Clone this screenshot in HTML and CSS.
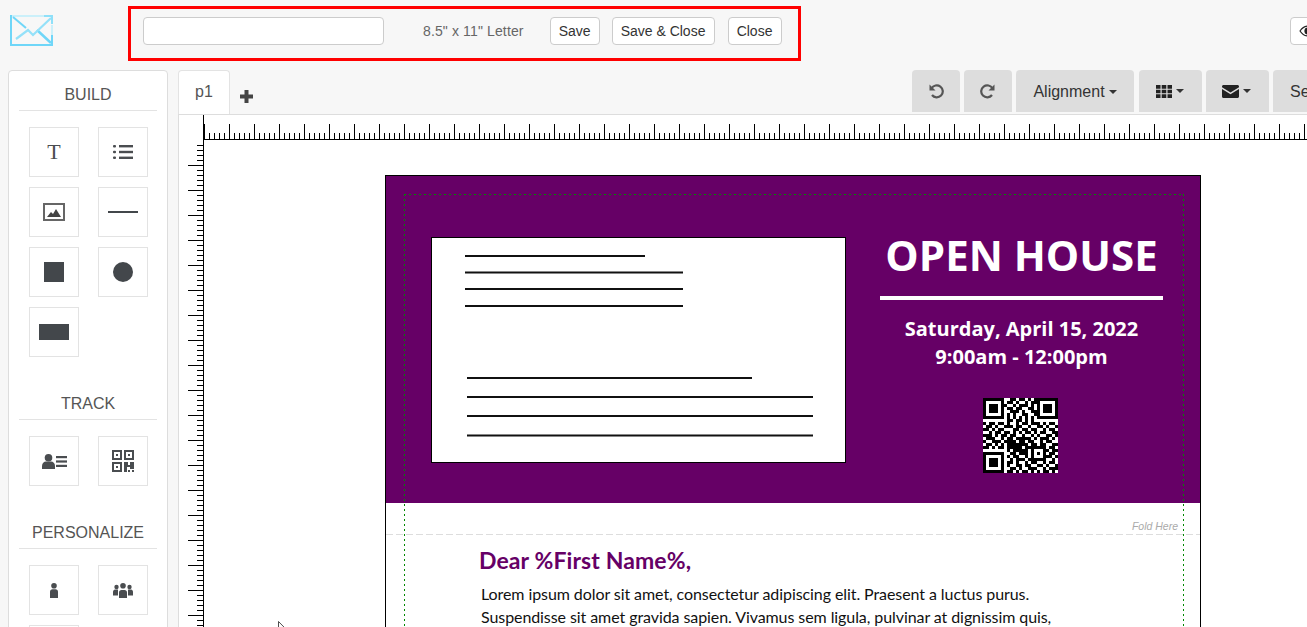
FILE: index.html
```html
<!DOCTYPE html>
<html lang="en">
<head>
  <meta charset="UTF-8">
  <meta name="viewport" content="width=device-width, initial-scale=1.0">
  <title>Mailer Editor</title>
  <link rel="stylesheet" href="styles.css">
</head>
<body>
  <header class="topbar">
    <svg class="logo" width="43" height="31" viewBox="0 0 43 31" fill="none">
      <path d="M34 1H1v29h41V10" stroke="#bdeefc" stroke-width="1.5"/>
      <path d="M1 0v31M0 30h43M42 20v11" stroke="#6fd6f8" stroke-width="2"/>
      <path d="M3 2l13 11" stroke="#6fd6f8" stroke-width="2"/>
      <path d="M27 15l14 13" stroke="#6fd6f8" stroke-width="2.5"/>
      <path d="M6 24l12-9 5 5L41 3" stroke="#94e1f9" stroke-width="2.2"/>
      <path d="M34 1h8v8" stroke="#8fe0f9" stroke-width="2"/>
    </svg>
    <div class="title-box">
      <input class="name-input" type="text">
      <span class="paper-size">8.5" x 11" Letter</span>
      <button class="btn">Save</button>
      <button class="btn btn-wide">Save &amp; Close</button>
      <button class="btn btn-close">Close</button>
    </div>
    <button class="btn btn-eye">
      <svg width="18" height="12" viewBox="0 0 18 12"><path d="M1 6c2-3 5-5 8-5s6 2 8 5c-2 3-5 5-8 5S3 9 1 6z" fill="none" stroke="#222" stroke-width="1.2"/><circle cx="9" cy="6" r="3.6" fill="#222"/></svg>
    </button>
  </header>

  <div class="workspace">
    <aside class="sidebar">
      <h2 class="side-title">BUILD</h2>
      <div class="tiles">
        <div class="tile tile-text">T</div>
        <div class="tile">
          <svg width="20" height="14" viewBox="0 0 20 14" fill="#4a4d50"><rect x="0" y="0" width="3" height="2.4" rx="1"/><rect x="0" y="5.8" width="3" height="2.4" rx="1"/><rect x="0" y="11.6" width="3" height="2.4" rx="1"/><rect x="6" y="0" width="14" height="2.4"/><rect x="6" y="5.8" width="14" height="2.4"/><rect x="6" y="11.6" width="14" height="2.4"/></svg>
        </div>
        <div class="tile">
          <svg width="22" height="18" viewBox="0 0 22 18"><rect x="1" y="1" width="20" height="16" fill="#fff" stroke="#666" stroke-width="2"/><path d="M4 14l4-5 2 2 3-5 5 8z" fill="#444"/></svg>
        </div>
        <div class="tile"><div class="shape-line"></div></div>
        <div class="tile"><div class="shape-square"></div></div>
        <div class="tile"><div class="shape-circle"></div></div>
        <div class="tile"><div class="shape-rect"></div></div>
      </div>

      <h2 class="side-title side-title-next">TRACK</h2>
      <div class="tiles">
        <div class="tile">
          <svg width="25" height="15" viewBox="0 0 25 15" fill="#4a4d50"><circle cx="6.5" cy="3.8" r="3.8"/><path d="M0 15v-3c0-3 2-4.500 4-4.500h5c2 0 4 1.500 4 4.500v3z"/><rect x="14" y="2" width="11" height="2.200"/><rect x="14" y="6.400" width="11" height="2.200"/><rect x="14" y="10.800" width="11" height="2.200"/></svg>
        </div>
        <div class="tile">
          <svg width="22" height="22" viewBox="0 0 22 22" fill="#4a4d50"><path fill-rule="evenodd" d="M0 0h10v10H0zM2 2v6h6V2zM12 0h10v10H12zM14 2v6h6V2zM0 12h10v10H0zM2 14v6h6v-6z"/><rect x="4" y="4" width="2" height="2"/><rect x="16" y="4" width="2" height="2"/><rect x="4" y="16" width="2" height="2"/><path d="M12 12h4v3h2v-3h4v7h-4v-2h-3v5h-3z"/><rect x="16" y="20" width="2" height="2"/><rect x="20" y="20" width="2" height="2"/></svg>
        </div>
      </div>

      <h2 class="side-title side-title-last">PERSONALIZE</h2>
      <div class="tiles">
        <div class="tile">
          <svg width="8" height="15" viewBox="0 0 8 15" fill="#4a4d50"><circle cx="4" cy="2.800" r="2.800"/><path d="M0 15V9c0-2 1-2.800 2.500-2.800h3C7 6.200 8 7 8 9v6z"/></svg>
        </div>
        <div class="tile">
          <svg width="20" height="15" viewBox="0 0 20 15" fill="#4a4d50"><circle cx="10" cy="2.800" r="2.800"/><circle cx="3.500" cy="4" r="2.200"/><circle cx="16.500" cy="4" r="2.200"/><path d="M6 15V9.500C6 8 7 7 8.500 7h3C13 7 14 8 14 9.500V15z"/><path d="M0 12.500V9c0-1.500 1-2.500 2-2.500h3v6zM20 12.500V9c0-1.500-1-2.500-2-2.500h-3v6z"/></svg>
        </div>
        <div class="tile"></div>
      </div>
    </aside>

    <main class="editor">
      <div class="editor-head">
        <div class="tab">p1</div>
        <svg class="add-tab" width="13" height="13" viewBox="0 0 13 13"><path d="M6.500 0v13M0 6.500h13" stroke="#444" stroke-width="4"/></svg>
        <div class="tools">
          <button class="tool tool-icon">
            <svg width="16" height="16" viewBox="0 0 16 16" fill="none"><path d="M3.500 5.500A6 6 0 1 1 4 12" stroke="#555" stroke-width="2.200"/><path d="M1.500 1.500v6h6z" fill="#555"/></svg>
          </button>
          <button class="tool tool-icon">
            <svg width="16" height="16" viewBox="0 0 16 16" fill="none"><path d="M12.500 5.500A6 6 0 1 0 12 12" stroke="#555" stroke-width="2.200"/><path d="M14.500 1.500v6h-6z" fill="#555"/></svg>
          </button>
          <button class="tool tool-align">Alignment<span class="caret"></span></button>
          <button class="tool tool-menu">
            <svg width="16" height="13" viewBox="0 0 16 13" fill="#222"><path d="M0 0h4.500v3.700H0zM5.700 0h4.600v3.700H5.700zM11.500 0H16v3.700h-4.500zM0 4.700h4.500v3.600H0zM5.700 4.700h4.600v3.600H5.700zM11.500 4.700H16v3.600h-4.500zM0 9.300h4.500V13H0zM5.700 9.300h4.600V13H5.700zM11.500 9.300H16V13h-4.500z"/></svg>
            <span class="caret"></span>
          </button>
          <button class="tool tool-menu">
            <svg width="17" height="13" viewBox="0 0 17 13" fill="#222"><path d="M1.500 0h14c.800 0 1.500.700 1.500 1.500v.700L8.500 7.500 0 2.200v-.700C0 .700.700 0 1.500 0zM0 4l8.500 5.200L17 4v7.500c0 .800-.700 1.500-1.500 1.500h-14C.700 13 0 12.300 0 11.500z"/></svg>
            <span class="caret"></span>
          </button>
          <button class="tool">Settings</button>
        </div>
      </div>

      <div class="canvas">
        <div class="ruler-corner"></div>
        <div class="ruler-top"></div>
        <div class="ruler-left"><div class="ruler-left-ticks"></div></div>
        <div class="sheet">
          <div class="page">
            <div class="trim-guide"></div>
            <section class="hero">
              <div class="address-panel">
                <svg width="413" height="224" viewBox="0 0 413 224" stroke="#111" stroke-width="2">
                  <path d="M33 18h180M33 34.500h218M33 51h218M33 68h218"/>
                  <path d="M35 140h285M35 159h346M35 178h346M35 197.500h346"/>
                </svg>
              </div>
              <div class="event">
                <h1 class="event-title">OPEN HOUSE</h1>
                <div class="event-rule"></div>
                <p class="event-when">Saturday, April 15, 2022<br>9:00am - 12:00pm</p>
                <svg class="qr" width="75" height="75" viewBox="0 0 25 25" shape-rendering="crispEdges">
                  <path stroke="#000" stroke-width="1" fill="none" d="M0 .5h7M9 .5h2M12 .5h2M15 .5h1M17 .5h8M0 1.500h1M6 1.500h1M8 1.500h2M11 1.500h1M14 1.500h1M16 1.500h3M24 1.500h1M0 2.500h1M2 2.500h3M6 2.500h2M10 2.500h1M12 2.500h3M16 2.500h1M18 2.500h1M20 2.500h3M24 2.500h1M0 3.500h1M2 3.500h3M6 3.500h1M8 3.500h2M11 3.500h2M15 3.500h2M18 3.500h1M20 3.500h3M24 3.500h1M0 4.500h1M2 4.500h3M6 4.500h1M9 4.500h3M13 4.500h1M16 4.500h3M20 4.500h3M24 4.500h1M0 5.500h1M6 5.500h1M8 5.500h1M10 5.500h1M13 5.500h2M17 5.500h2M24 5.500h1M0 6.500h7M8 6.500h1M10 6.500h1M12 6.500h1M14 6.500h1M16 6.500h1M18 6.500h7M8 7.500h2M11 7.500h2M14 7.500h1M16 7.500h1M0 8.500h1M2 8.500h2M5 8.500h2M8 8.500h1M11 8.500h1M13 8.500h2M16 8.500h3M20 8.500h1M22 8.500h2M1 9.500h2M4 9.500h1M7 9.500h3M11 9.500h2M15 9.500h1M18 9.500h2M21 9.500h1M24 9.500h1M0 10.500h2M3 10.500h1M5 10.500h2M10 10.500h2M13 10.500h2M16 10.500h2M20 10.500h1M22 10.500h2M2 11.500h1M4 11.500h2M7 11.500h2M10 11.500h1M12 11.500h1M14 11.500h2M17 11.500h1M19 11.500h2M23 11.500h2M0 12.500h3M4 12.500h1M6 12.500h2M9 12.500h2M13 12.500h1M16 12.500h1M18 12.500h1M21 12.500h2M24 12.500h1M1 13.500h3M6 13.500h1M8 13.500h2M11 13.500h5M17 13.500h1M19 13.500h3M23 13.500h1M0 14.500h1M3 14.500h3M7 14.500h4M12 14.500h2M15 14.500h2M19 14.500h1M21 14.500h2M1 15.500h2M4 15.500h1M6 15.500h1M8 15.500h7M16 15.500h2M19 15.500h2M23 15.500h2M0 16.500h2M3 16.500h1M5 16.500h2M8 16.500h5M14 16.500h7M22 16.500h2M8 17.500h1M10 17.500h5M16 17.500h1M20 17.500h2M23 17.500h2M0 18.500h7M9 18.500h2M12 18.500h3M16 18.500h1M18 18.500h1M20 18.500h1M22 18.500h2M0 19.500h1M6 19.500h1M8 19.500h1M10 19.500h2M14 19.500h1M16 19.500h1M20 19.500h3M24 19.500h1M0 20.500h1M2 20.500h3M6 20.500h1M9 20.500h1M11 20.500h3M15 20.500h6M23 20.500h1M0 21.500h1M2 21.500h3M6 21.500h1M8 21.500h2M11 21.500h1M14 21.500h1M16 21.500h2M20 21.500h1M22 21.500h2M0 22.500h1M2 22.500h3M6 22.500h1M8 22.500h1M11 22.500h2M14 22.500h2M18 22.500h2M21 22.500h1M24 22.500h1M0 23.500h1M6 23.500h1M9 23.500h2M12 23.500h1M15 23.500h3M20 23.500h1M22 23.500h3M0 24.500h7M8 24.500h2M11 24.500h1M13 24.500h2M16 24.500h1M18 24.500h1M20 24.500h2M23 24.500h1"/>
                </svg>
              </div>
            </section>
            <div class="fold"><span class="fold-label">Fold Here</span></div>
            <section class="letter">
              <h2 class="letter-greeting">Dear %First Name%,</h2>
              <p class="letter-body">Lorem ipsum dolor sit amet, consectetur adipiscing elit. Praesent a luctus purus.<br>Suspendisse sit amet gravida sapien. Vivamus sem ligula, pulvinar at dignissim quis,</p>
            </section>
          </div>
        </div>
      </div>
    </main>
  </div>

  <svg class="cursor" width="8" height="12" viewBox="0 0 8 12"><path d="M.5.500v9l2.200-2 1.500 3.500 1.300-.600-1.500-3.300h3z" fill="#fff" stroke="#222" stroke-width=".8"/></svg>
</body>
</html>
```

FILE: styles.css
```css
* {
  margin: 0;
  padding: 0;
  box-sizing: border-box;
}

html, body {
  height: 627px;
  overflow: hidden;
}

body {
  position: relative;
  width: 1307px;
  background: #f7f7f7;
  color: #333;
  font-family: "Liberation Sans", Arial, sans-serif;
  font-size: 14px;
}

.topbar {
  display: flex;
  height: 70px;
  padding-left: 10px;
}

.logo {
  margin-top: 15px;
  flex-shrink: 0;
}

.title-box {
  display: flex;
  align-items: flex-start;
  flex-shrink: 0;
  width: 673px;
  height: 55px;
  margin: 6px 0 0 75px;
  padding: 8px 0 0 12px;
  border: 3px solid #f00;
}

.name-input {
  width: 241px;
  height: 28px;
  background: #fff;
  border: 1px solid #ccc;
  border-radius: 4px;
}

.paper-size {
  margin: 0 26px 0 39px;
  color: #666;
  letter-spacing: .13px;
  line-height: 28px;
}

.btn {
  height: 28px;
  padding: 0 8px;
  background: #fff;
  border: 1px solid #ccc;
  border-radius: 4px;
  color: #333;
  font: 14px "Liberation Sans", Arial, sans-serif;
  white-space: nowrap;
}

.btn + .btn {
  margin-left: 12px;
}

.btn-wide {
  width: 103px;
  padding: 0;
}

.btn-wide + .btn {
  margin-left: 13px;
}

.btn-close {
  width: 54px;
  padding: 0;
}

.btn-eye {
  flex-shrink: 0;
  width: 60px;
  margin: 17px 0 0 489px;
  padding: 2px 0 0 8px;
  text-align: left;
}

.workspace {
  display: flex;
  padding-left: 8px;
  height: 557px;
}

.sidebar {
  flex-shrink: 0;
  width: 160px;
  height: 600px;
  padding: 0 10px;
  background: #fff;
  border: 1px solid #ddd;
  border-radius: 4px 4px 0 0;
}

.side-title {
  height: 40px;
  padding-top: 15px;
  border-bottom: 1px solid #e3e3e3;
  color: #555;
  font-size: 16px;
  font-weight: normal;
  line-height: 18px;
  text-align: center;
}

.side-title-next {
  margin-top: 23px;
}

.side-title-last {
  margin-top: 23px;
}

.tiles {
  display: grid;
  grid-template-columns: 50px 50px;
  column-gap: 19px;
  row-gap: 10px;
  padding: 16px 0 0 10px;
}

.tile {
  display: flex;
  align-items: center;
  justify-content: center;
  height: 50px;
  background: #fff;
  border: 1px solid #e3e3e3;
}

.tile-text {
  color: #4a4d50;
  font-family: "Liberation Serif", serif;
  font-size: 22px;
}

.shape-line {
  width: 30px;
  height: 2px;
  background: #43474b;
}

.shape-square {
  width: 20px;
  height: 20px;
  background: #43474b;
}

.shape-circle {
  width: 20px;
  height: 20px;
  background: #43474b;
  border-radius: 50%;
}

.shape-rect {
  width: 30px;
  height: 16px;
  background: #43474b;
}

.editor {
  flex-shrink: 0;
  width: 1300px;
  margin-left: 10px;
}

.editor-head {
  display: flex;
  height: 44px;
}

.tab {
  width: 52px;
  height: 44px;
  padding-top: 12px;
  background: #fff;
  border: 1px solid #e3e3e3;
  border-bottom: none;
  border-radius: 4px 4px 0 0;
  color: #555;
  font-size: 16px;
  line-height: 18px;
  text-align: center;
}

.add-tab {
  flex-shrink: 0;
  margin: 20px 0 0 10px;
}

.tools {
  display: flex;
  flex-shrink: 0;
  gap: 4px;
  margin-left: 659px;
}

.tool {
  display: flex;
  align-items: center;
  justify-content: center;
  flex-shrink: 0;
  height: 42px;
  padding: 2px 17px 0;
  background: #ddd;
  border: none;
  border-radius: 4px 4px 0 0;
  color: #333;
  font: 16px "Liberation Sans", Arial, sans-serif;
  white-space: nowrap;
}

.tool-icon {
  width: 48px;
  padding: 0;
}

.tool-align {
  width: 118px;
  margin-right: 1px;
  padding: 2px 0 0;
}

.tool-menu {
  width: 63px;
  padding: 0 2px 0 0;
}

.caret {
  display: inline-block;
  margin-left: 4px;
  border-top: 4px solid #333;
  border-left: 4px solid transparent;
  border-right: 4px solid transparent;
}

.canvas {
  display: grid;
  grid-template-columns: 25px 1fr;
  grid-template-rows: 25px 1fr;
  height: 600px;
  background: #fff;
  border-top: 1px solid #ddd;
  border-left: 1px solid #ddd;
}

.ruler-corner {
  border-right: 1px solid #000;
}

.ruler-top {
  border-bottom: 1px solid #000;
  background:
    linear-gradient(90deg, #000 1px, transparent 1px) 0 100% / 25px 15px repeat-x,
    linear-gradient(90deg, #000 1px, transparent 1px) 0 100% / 5px 6px repeat-x;
}

.ruler-left {
  border-right: 1px solid #000;
}

.ruler-left-ticks {
  height: 100%;
  margin-top: 5px;
  background:
    linear-gradient(transparent 20px, #000 20px, #000 21px, transparent 21px) 100% 0 / 15px 25px repeat-y,
    linear-gradient(#000 1px, transparent 1px) 100% 0 / 6px 5px repeat-y;
}

.sheet {
  padding: 35px 0 0 181px;
}

.page {
  position: relative;
  width: 816px;
  height: 1056px;
  background: #fff;
  border: 1px solid #000;
}

.trim-guide {
  position: absolute;
  top: 18px;
  left: 18px;
  right: 16px;
  bottom: 18px;
  background:
    linear-gradient(90deg, #080 2px, transparent 2px) 0 0 / 5px 1px repeat-x,
    linear-gradient(90deg, #080 2px, transparent 2px) 0 100% / 5px 1px repeat-x,
    linear-gradient(#080 2px, transparent 2px) 0 0 / 1px 5px repeat-y,
    linear-gradient(#080 2px, transparent 2px) 100% 0 / 1px 5px repeat-y;
}

.hero {
  display: flex;
  height: 327px;
  padding: 61px 0 0 45px;
  background: #606;
}

.address-panel {
  flex-shrink: 0;
  width: 415px;
  height: 226px;
  background: #fff;
  border: 1px solid #000;
}

.event {
  display: flex;
  flex-direction: column;
  align-items: center;
  flex: 1;
  padding-right: 3px;
  color: #fff;
  font-family: "Open Sans", sans-serif;
}

.event-title {
  margin-top: -2px;
  font-size: 42px;
  font-weight: 700;
  line-height: 39px;
  white-space: nowrap;
}

.event-rule {
  width: 283px;
  height: 4px;
  margin-top: 22px;
  background: #fff;
}

.event-when {
  margin-top: 15px;
  font-size: 20px;
  font-weight: 700;
  line-height: 28px;
  text-align: center;
  white-space: nowrap;
}

.qr {
  margin: 27px 2px 0 0;
  background: #fff;
}

.fold {
  display: flex;
  align-items: flex-end;
  justify-content: flex-end;
  height: 32px;
  padding: 0 22px 3px 0;
  background: linear-gradient(90deg, #ddd 7px, transparent 7px) 0 100% / 10px 1px repeat-x;
}

.fold-label {
  color: #aaa;
  font-size: 10.5px;
  font-style: italic;
}

.letter {
  padding: 11px 0 0 93px;
  color: #111;
  font-family: Lato, sans-serif;
}

.letter-greeting {
  color: #606;
  font-size: 23px;
  font-weight: 700;
  letter-spacing: .1px;
  line-height: 28px;
}

.letter-body {
  margin: 8px 0 0 2px;
  font-size: 16px;
  letter-spacing: -.08px;
  line-height: 23px;
  white-space: nowrap;
}

.cursor {
  position: absolute;
  top: 621px;
  left: 278px;
}
```
